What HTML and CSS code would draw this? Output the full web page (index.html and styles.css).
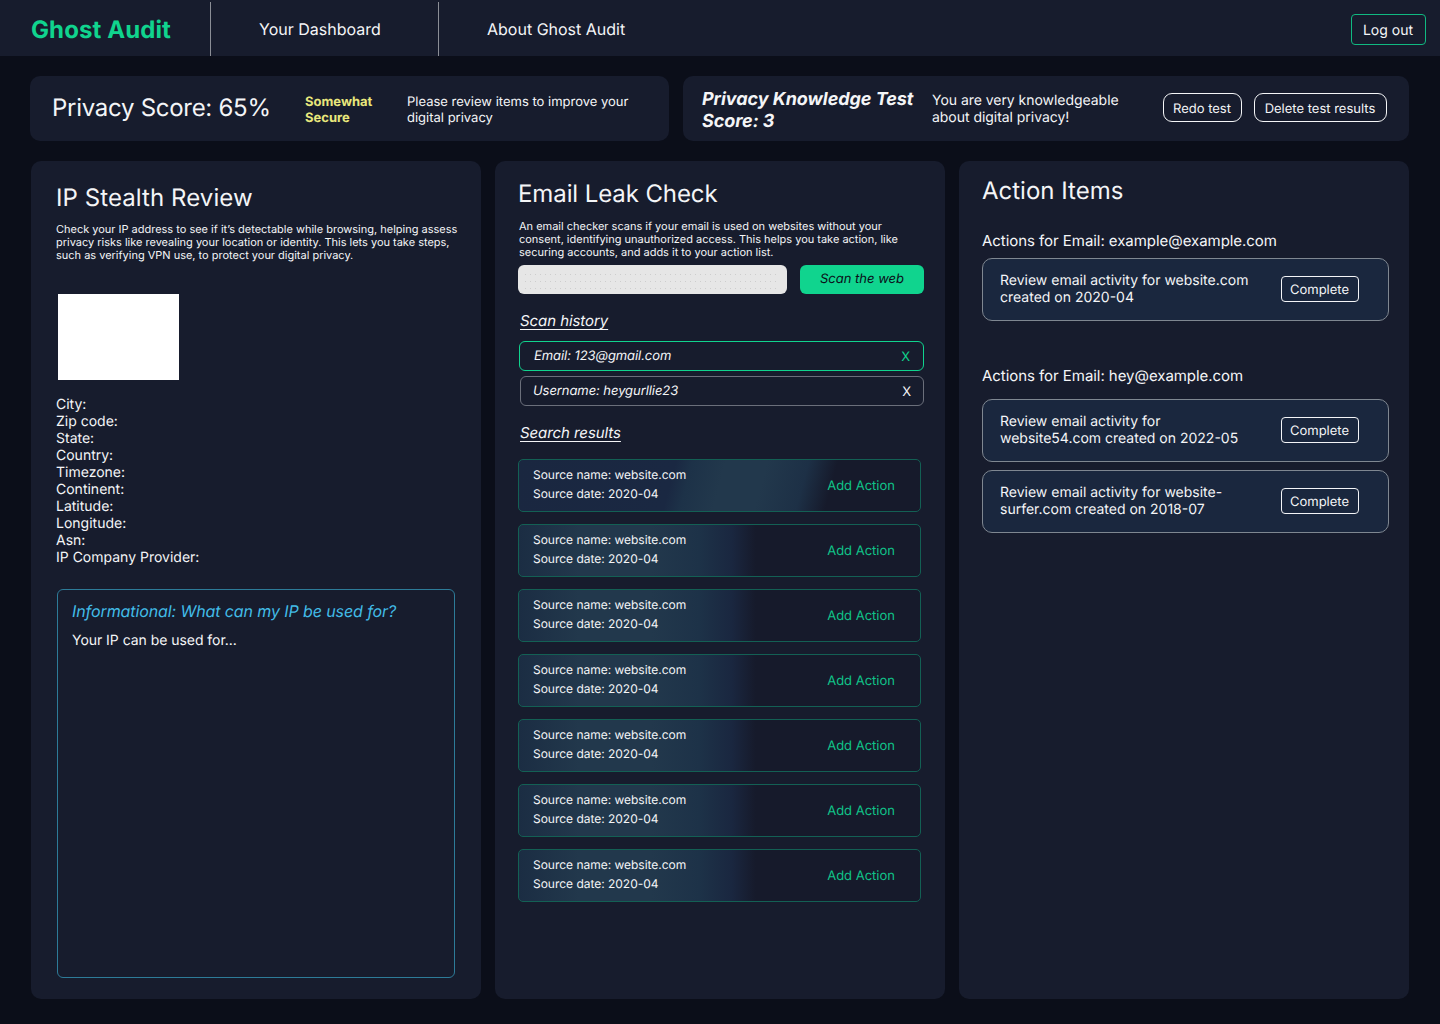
FILE: index.html
```html
<!DOCTYPE html>
<html>
  <head>
    <meta charset="utf-8">
    <title>Ghost Audit</title>
    <link rel="stylesheet" href="styles.css">
  </head>
  <body>
    <div class="header">
      <a class="logo" href="#">Ghost Audit</a>
      <a class="nav" href="#">Your Dashboard</a>
      <a class="nav" href="#">About Ghost Audit</a>
      <button class="logout">Log out</button>
    </div>

    <div class="scores">
      <div class="card privacy">
        <h2 class="score">Privacy Score: 65%</h2>
        <div class="rating">Somewhat Secure</div>
        <div class="advice">Please review items to improve your digital privacy</div>
      </div>
      <div class="card knowledge">
        <div class="test">Privacy Knowledge Test Score: 3</div>
        <div class="verdict">You are very knowledgeable about digital privacy!</div>
        <button class="pill redo">Redo test</button>
        <button class="pill delete">Delete test results</button>
      </div>
    </div>

    <div class="columns">
      <!-- IP -->
      <div class="card ip">
        <h2>IP Stealth Review</h2>
        <p class="intro">Check your IP address to see if it’s detectable while browsing, helping assess privacy risks like revealing your location or identity. This lets you take steps, such as verifying VPN use, to protect your digital privacy.</p>
        <div class="map"></div>
        <ul class="facts">
          <li>City:</li>
          <li>Zip code:</li>
          <li>State:</li>
          <li>Country:</li>
          <li>Timezone:</li>
          <li>Continent:</li>
          <li>Latitude:</li>
          <li>Longitude:</li>
          <li>Asn:</li>
          <li>IP Company Provider:</li>
        </ul>
        <div class="info">
          <h3>Informational: What can my IP be used for?</h3>
          <p>Your IP can be used for...</p>
        </div>
      </div>

      <!-- Email -->
      <div class="card email">
        <h2>Email Leak Check</h2>
        <p class="intro">An email checker scans if your email is used on websites without your consent, identifying unauthorized access. This helps you take action, like securing accounts, and adds it to your action list.</p>
        <form class="scan" onsubmit="return false;">
          <input type="text" class="query">
          <button class="go">Scan the web</button>
        </form>
        <h3 class="sub">Scan history</h3>
        <div class="history active"><span>Email: 123@gmail.com</span><a class="x">X</a></div>
        <div class="history"><span>Username: heygurllie23</span><a class="x">X</a></div>
        <h3 class="sub">Search results</h3>
        <div class="results">
          <div class="result first"><div>Source name: website.com<br>Source date: 2020-04</div><a class="add">Add Action</a></div>
          <div class="result"><div>Source name: website.com<br>Source date: 2020-04</div><a class="add">Add Action</a></div>
          <div class="result"><div>Source name: website.com<br>Source date: 2020-04</div><a class="add">Add Action</a></div>
          <div class="result"><div>Source name: website.com<br>Source date: 2020-04</div><a class="add">Add Action</a></div>
          <div class="result"><div>Source name: website.com<br>Source date: 2020-04</div><a class="add">Add Action</a></div>
          <div class="result"><div>Source name: website.com<br>Source date: 2020-04</div><a class="add">Add Action</a></div>
          <div class="result"><div>Source name: website.com<br>Source date: 2020-04</div><a class="add">Add Action</a></div>
        </div>
      </div>

      <!-- Actions -->
      <div class="card actions">
        <h2>Action Items</h2>
        <h3 class="for">Actions for Email: example@example.com</h3>
        <div class="group">
          <div class="item"><p>Review email activity for website.com created on 2020-04</p><button class="done">Complete</button></div>
        </div>
        <h3 class="for second">Actions for Email: hey@example.com</h3>
        <div class="group">
          <div class="item"><p>Review email activity for website54.com created on 2022-05</p><button class="done">Complete</button></div>
          <div class="item"><p>Review email activity for website-surfer.com created on 2018-07</p><button class="done">Complete</button></div>
        </div>
      </div>
    </div>
  </body>
</html>
```
FILE: styles.css
```css
* { box-sizing: border-box; }
body {
  margin: 0;
  height: 1024px;
  background: #0b0e19;
  color: #f4f5f7;
  font: 14px/17px Inter, sans-serif;
  text-rendering: geometricPrecision;
}
h2, h3, p, ul { margin: 0; padding: 0; }
h2 { font-size: 24px; line-height: 29px; font-weight: 400; }
h3 { font-weight: 400; }
a { color: inherit; text-decoration: none; }
button {
  font: 13px/16px Inter, sans-serif;
  color: #f4f5f7;
  background: none;
  border: 1px solid #f4f5f7;
  padding: 2px 1px 0 0;
  text-rendering: inherit;
}
.card { background: #171c2d; border-radius: 10px; }

/* header */
.header {
  display: flex;
  height: 56px;
  padding: 2px 14px 0 31px;
  background: #171c2d;
}
.logo {
  width: 179px;
  font-size: 24px;
  line-height: 56px;
  font-weight: 700;
  letter-spacing: 0.1px;
  color: #10d48e;
}
.nav {
  width: 228px;
  padding-left: 48px;
  border-left: 1px solid #8b8e96;
  font-size: 16px;
  line-height: 54px;
}
.logout {
  width: 75px;
  height: 31px;
  margin: 12px 0 0 auto;
  border-color: #10b981;
  border-radius: 4px;
  font-size: 14px;
}

/* score bar */
.scores { display: flex; gap: 14px; padding: 20px 31px 0 30px; }
.scores .card { display: flex; height: 65px; }
.privacy { width: 639px; padding: 17px 0 0 22px; }
.score { width: 253px; letter-spacing: -0.28px; }
.rating {
  width: 102px;
  padding: 1px 20px 0 0;
  font-size: 13px;
  line-height: 16px;
  font-weight: 700;
  color: #e9e77c;
}
.advice { width: 240px; padding-top: 1px; font-size: 13px; line-height: 16px; }
.knowledge { flex: 1; padding: 12px 22px 0 19px; }
.test {
  width: 230px;
  padding-top: 1px;
  font: italic 700 18px/22px Inter, sans-serif;
  letter-spacing: -0.05px;
}
.verdict { width: 200px; padding-top: 4px; letter-spacing: -0.04px; }
.pill { height: 29px; margin-top: 5px; border-radius: 9px; }
.redo { width: 79px; margin-left: auto; }
.delete { width: 133px; margin-left: 12px; }

/* columns */
.columns { display: flex; gap: 14px; padding: 20px 31px 0; }
.columns .card { width: 450px; height: 838px; }
.intro { font-size: 11px; line-height: 13px; letter-spacing: -0.01px; }

.ip { padding: 22px 20px 0 25px; }
.ip h2 { letter-spacing: 0.08px; }
.ip .intro { margin-top: 11px; }
.map { width: 121px; height: 86px; margin: 32px 0 16px 2px; background: #fff; }
.facts { list-style: none; }
.info {
  width: 398px;
  height: 389px;
  margin: 23px 0 0 1px;
  padding: 12px 14px;
  border: 1px solid #2d7b98;
  border-radius: 6px;
}
.info h3 {
  font-size: 16px;
  line-height: 19px;
  font-style: italic;
  letter-spacing: -0.1px;
  color: #42bde8;
}
.info p { margin-top: 11px; letter-spacing: -0.04px; }

.email { padding: 18px 21px 0 23px; }
.email h2 { letter-spacing: -0.1px; }
.email .intro { margin: 12px 20px 0 1px; }
.scan { display: flex; gap: 13px; margin-top: 6px; }
.query {
  width: 269px;
  height: 29px;
  padding: 9px 7px 5px;
  border: 0;
  border-radius: 6px;
  background: radial-gradient(circle at 0.5px 0.5px, #cdcdcd 0.7px, transparent 0.8px) 0 0 / 5px 7px content-box, #e6e6e6;
}
.go {
  width: 124px;
  padding: 0 0 2px;
  border: 0;
  border-radius: 6px;
  background: #10d48e;
  color: #0b0e19;
  font-style: italic;
}
.sub {
  margin: 18px 0 0 2px;
  font-size: 15px;
  line-height: 18px;
  font-style: italic;
  letter-spacing: -0.07px;
  text-decoration: underline;
  text-decoration-thickness: 1px;
  text-underline-offset: 3px;
}
.history {
  display: flex;
  justify-content: space-between;
  height: 30px;
  margin: 5px 0 0 2px;
  padding: 0 12px;
  border: 1px solid #6b6f7b;
  border-radius: 6px;
  font-size: 13px;
  line-height: 30px;
}
.history span { font-style: italic; line-height: 29px; letter-spacing: -0.07px; }
.history.active { margin: 11px 0 0 1px; padding: 0 13px 0 14px; border-color: #10d48e; }
.active .x { color: #10d48e; }
.results { display: grid; gap: 12px; margin-top: 17px; }
.result {
  display: flex;
  justify-content: space-between;
  width: 403px;
  height: 53px;
  padding: 5px 25px 0 14px;
  border: 1px solid #136054;
  border-radius: 5px;
  background: linear-gradient(90deg, #1b2d43 0%, #22384c 15%, #22384c 33%, #1d3248 45%, #1a2740 53%, #161a2b 59%);
  font-size: 12px;
  line-height: 19px;
  letter-spacing: -0.02px;
}
.result.first {
  background: linear-gradient(105deg, #1a2740 0%, #1a2842 38%, #1d3248 42%, #22384c 50%, #22384c 60%, #1d3046 70%, #161a2b 77%);
}
.add { padding-top: 12px; font-size: 13px; letter-spacing: 0; color: #10c389; }

.actions { padding: 15px 20px 0 23px; }
.actions h2 { letter-spacing: 0; }
.for { margin-top: 27px; font-size: 15px; line-height: 18px; letter-spacing: -0.05px; }
.for.second { margin-top: 46px; }
.group { display: grid; gap: 8px; margin-top: 8px; }
.second + .group { margin-top: 14px; }
.item {
  display: flex;
  justify-content: space-between;
  width: 407px;
  height: 63px;
  padding: 13px 29px 0 17px;
  border: 1px solid #7f8791;
  border-radius: 10px;
  background: #1a273e;
}
.item p { width: 255px; }
.done { width: 78px; height: 26px; margin-top: 4px; border-radius: 4px; }
```
